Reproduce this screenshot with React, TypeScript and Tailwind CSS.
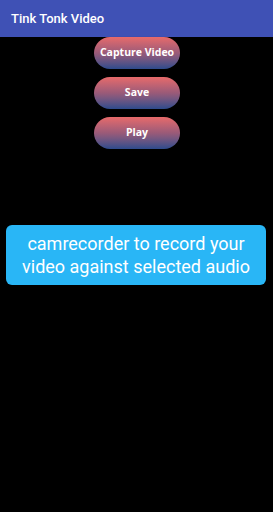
export default function App() {
  const buttons = ["Capture Video", "Save", "Play"];

  return (
    <div className="w-[273px] h-[512px] bg-black flex flex-col" style={{ fontFamily: "Roboto, sans-serif" }}>
      {/* App bar */}
      <div className="h-[37px] bg-[#3f51b5] flex items-center px-[11px] shrink-0">
        <span className="text-white text-[13px] font-medium">Tink Tonk Video</span>
      </div>

      {/* Action buttons */}
      <div className="flex flex-col items-center gap-[8px] pl-[1px]">
        {buttons.map((label) => (
          <button
            key={label}
            className="w-[86px] h-[32px] rounded-full bg-gradient-to-b from-[#e86a6a] via-[#9a5a78] to-[#2c4a8c] text-white text-[10.5px] font-bold shadow-[0_1px_2px_rgba(0,0,0,0.6)] font-['Open_Sans',sans-serif]"
          >
            {label}
          </button>
        ))}
      </div>

      {/* Info box */}
      <div className="mt-[76px] mx-[6px] w-[260px] h-[60px] rounded-[6px] bg-[#29b6f6] flex items-center justify-center text-center">
        <p className="text-white text-[18px] leading-[23px]">
          camrecorder to record your
          <br />
          video against selected audio
        </p>
      </div>
    </div>
  );
}
